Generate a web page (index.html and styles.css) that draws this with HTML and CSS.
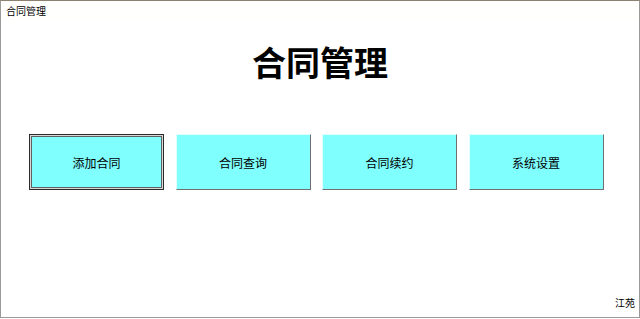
FILE: index.html
```html
<!DOCTYPE html>
<html lang="zh-CN">
<head>
<meta charset="utf-8">
<title>合同管理</title>
<link rel="stylesheet" href="styles.css">
</head>
<body>
<div class="window">
  <div class="titlebar">合同管理</div>
  <h1 class="heading">合同管理</h1>
  <div class="buttons">
    <button class="btn focused">添加合同</button>
    <button class="btn">合同查询</button>
    <button class="btn">合同续约</button>
    <button class="btn">系统设置</button>
  </div>
  <div class="footer">江苑</div>
</div>
</body>
</html>
```
FILE: styles.css
```css
html, body {
  margin: 0;
  padding: 0;
  background: #ffffff;
}
body {
  width: 640px;
  height: 319px;
  overflow: hidden;
  font-family: "Noto Sans CJK SC", "Noto Sans", sans-serif;
  color: #000;
}
.window {
  box-sizing: border-box;
  width: 640px;
  height: 318px;
  border-top: 1px solid #8c8070;
  border-left: 1px solid #9a9a9a;
  border-right: 1px solid #9a9a9a;
  border-bottom: 1px solid #9a9a9a;
  display: flex;
  flex-direction: column;
}
.titlebar {
  height: 19px;
  font-size: 10px;
  line-height: 19px;
  padding-left: 5px;
  background: #fffffd;
}
.heading {
  margin: 20px 0 0 0;
  text-align: center;
  font-size: 34px;
  line-height: 44px;
  font-weight: 700;
}
.buttons {
  margin-top: 50px;
  padding-left: 28px;
  display: flex;
  gap: 11.5px;
}
.btn {
  box-sizing: border-box;
  width: 135px;
  height: 56px;
  background: #80ffff;
  border: none;
  border-right: 1px solid #707070;
  border-bottom: 1px solid #707070;
  border-top: 1px solid #e0ffff;
  border-left: 1px solid #e0ffff;
  font-family: "Noto Sans CJK SC", "Noto Sans", sans-serif;
  font-size: 12px;
  color: #000;
  padding: 0;
}
.btn.focused {
  border: 1px solid #2a2a2a;
  box-shadow: inset 0 0 0 1px #d8d8d8, inset 0 0 0 2px #606060;
}
.footer {
  margin-top: auto;
  align-self: flex-end;
  font-size: 10px;
  line-height: 14px;
  padding: 0 4px 7px 0;
}
```
